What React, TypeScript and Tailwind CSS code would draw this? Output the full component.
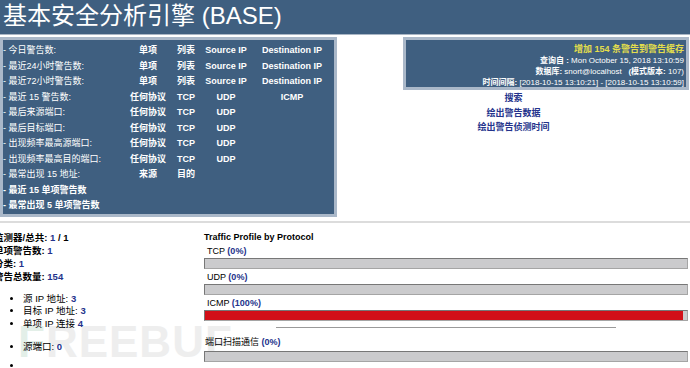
import React from 'react';

const font = { fontFamily: '"Liberation Sans", "Noto Sans CJK SC", Arial, sans-serif' };

type Row = { label: string; bold?: boolean; cells: string[] };

const rows: Row[] = [
  { label: '- 今日警告数:', cells: ['单项', '列表', 'Source IP', 'Destination IP'] },
  { label: '- 最近24小时警告数:', cells: ['单项', '列表', 'Source IP', 'Destination IP'] },
  { label: '- 最近72小时警告数:', cells: ['单项', '列表', 'Source IP', 'Destination IP'] },
  { label: '- 最近 15 警告数:', cells: ['任何协议', 'TCP', 'UDP', 'ICMP'] },
  { label: '- 最后来源端口:', cells: ['任何协议', 'TCP', 'UDP', ''] },
  { label: '- 最后目标端口:', cells: ['任何协议', 'TCP', 'UDP', ''] },
  { label: '- 出现频率最高源端口:', cells: ['任何协议', 'TCP', 'UDP', ''] },
  { label: '- 出现频率最高目的端口:', cells: ['任何协议', 'TCP', 'UDP', ''] },
  { label: '- 最常出现 15 地址:', cells: ['来源', '目的', '', ''] },
  { label: '- 最近 15 单项警告数', bold: true, cells: ['', '', '', ''] },
  { label: '- 最常出现 5 单项警告数', bold: true, cells: ['', '', '', ''] },
];

function Bar({ pct }: { pct: number }) {
  return (
    <div className="mt-[1px] h-[11px] border border-t-[#777] border-l-[#777] border-b-[#a5a5a5] border-r-[#a5a5a5] bg-[#cbcbcd] flex">
      {pct > 0 && <div className="h-full bg-[#d20f18]" style={{ width: `calc(${pct}% - 4px)` }} />}
    </div>
  );
}

function Proto({ name, pct }: { name: string; pct: number }) {
  return (
    <div className="mt-[2px]">
      <div className="pl-[3px] text-[9px] leading-[12px] text-black">
        {name} <span className="font-bold text-[#24338c]">({pct}%)</span>
      </div>
      <Bar pct={pct} />
    </div>
  );
}

export default function App() {
  return (
    <div className="relative w-[690px] h-[368px] overflow-hidden bg-white" style={font}>
      {/* watermark */}
      <div className="pointer-events-none absolute left-[18px] top-[320px] text-[44px] font-bold leading-none tracking-[1px]">
        <span className="text-[#e3efe8]">F</span>
        <span className="text-[#eeeeee]">REEBUF</span>
      </div>

      {/* header */}
      <header className="h-[35px] border-b border-[#a9b6c5] bg-[#3f5f80] pl-[3px] flex items-center">
        <h1 className="text-[24px] leading-none text-white -mt-[2px]">基本安全分析引擎 (BASE)</h1>
      </header>

      {/* top area */}
      <div className="mt-[2px] flex">
        <div className="w-[337px] h-[180px] border-[3px] border-[#aab8c9] bg-[#3f5f80] pt-[3px] text-white text-[9px]">
          {rows.map((r, i) => (
            <div key={i} className="grid grid-cols-[123px_44px_32px_48px_84px] leading-[15.5px] h-[15.5px]">
              <span className={r.bold ? 'font-bold' : ''}>{r.label}</span>
              {r.cells.map((c, j) => (
                <span key={j} className="text-center font-bold whitespace-nowrap">{c}</span>
              ))}
            </div>
          ))}
        </div>

        <div className="flex-1 flex flex-col">
          <div className="ml-auto mr-[1px] w-[286px] h-[53px] border-[3px] border-[#aab8c9] bg-[#3f5f80] pt-[4px] pr-[2px] text-right text-white">
            <div className="text-[9px] leading-[11px] font-bold text-[#e4de4c]">增加 154 条警告到警告缓存</div>
            <div className="text-[8px] leading-[11px]"><b>查询自 :</b> Mon October 15, 2018 13:10:59</div>
            <div className="text-[8px] leading-[11px]"><b>数据库:</b> snort@localhost &nbsp; <b>(模式版本:</b> 107)</div>
            <div className="text-[8px] leading-[11px]"><b>时间间隔:</b> [2018-10-15 13:10:21] - [2018-10-15 13:10:59]</div>
          </div>
          <div className="mt-[1px] flex flex-col items-center text-[9px] font-bold leading-[14.5px] text-[#24338c]">
            <span>搜索</span>
            <span>绘出警告数据</span>
            <span>绘出警告侦测时间</span>
          </div>
        </div>
      </div>

      <div className="mt-[4px] h-[2px] bg-[#dcdcdc]" />

      {/* bottom area */}
      <div className="mt-[8px] flex">
        <div className="w-[210px] -ml-[6px] text-[9.5px]">
          <div className="relative font-bold leading-[13px]">
            <div>监测器/总共: <span className="text-[#24338c]">1</span> / 1</div>
            <div>单项警告数: <span className="text-[#24338c]">1</span></div>
            <div>分类: <span className="text-[#24338c]">1</span></div>
            <div>警告总数量: <span className="text-[#24338c]">154</span></div>
          </div>
          <ul className="relative mt-[10px] ml-[19px] list-disc pl-[10px] leading-[12.3px] text-[9.5px]">
            <li>源 IP 地址: <b className="text-[#24338c]">3</b></li>
            <li>目标 IP 地址: <b className="text-[#24338c]">3</b></li>
            <li>单项 IP 连接 <b className="text-[#24338c]">4</b></li>
            <li className="mt-[11px]">源端口: <b className="text-[#24338c]">0</b></li>
            <li className="mt-[7px]">&nbsp;</li>
          </ul>
        </div>

        <div className="relative w-[484px]">
          <div className="text-[9px] font-bold leading-[12px] text-black">Traffic Profile by Protocol</div>
          <Proto name="TCP" pct={0} />
          <Proto name="UDP" pct={0} />
          <Proto name="ICMP" pct={100} />
          <div className="mx-auto mt-[6px] w-[340px] h-[1px] bg-[#9a9a9a]" />
          <div className="mt-[8px]">
            <div className="pl-[1px] text-[9px] leading-[12px] text-black">
              端口扫描通信 <span className="font-bold text-[#24338c]">(0%)</span>
            </div>
            <div className="mt-[3px] h-[11px] border border-t-[#777] border-l-[#777] border-b-[#a5a5a5] border-r-[#a5a5a5] bg-[#cbcbcd]" />
          </div>
        </div>
      </div>
    </div>
  );
}
